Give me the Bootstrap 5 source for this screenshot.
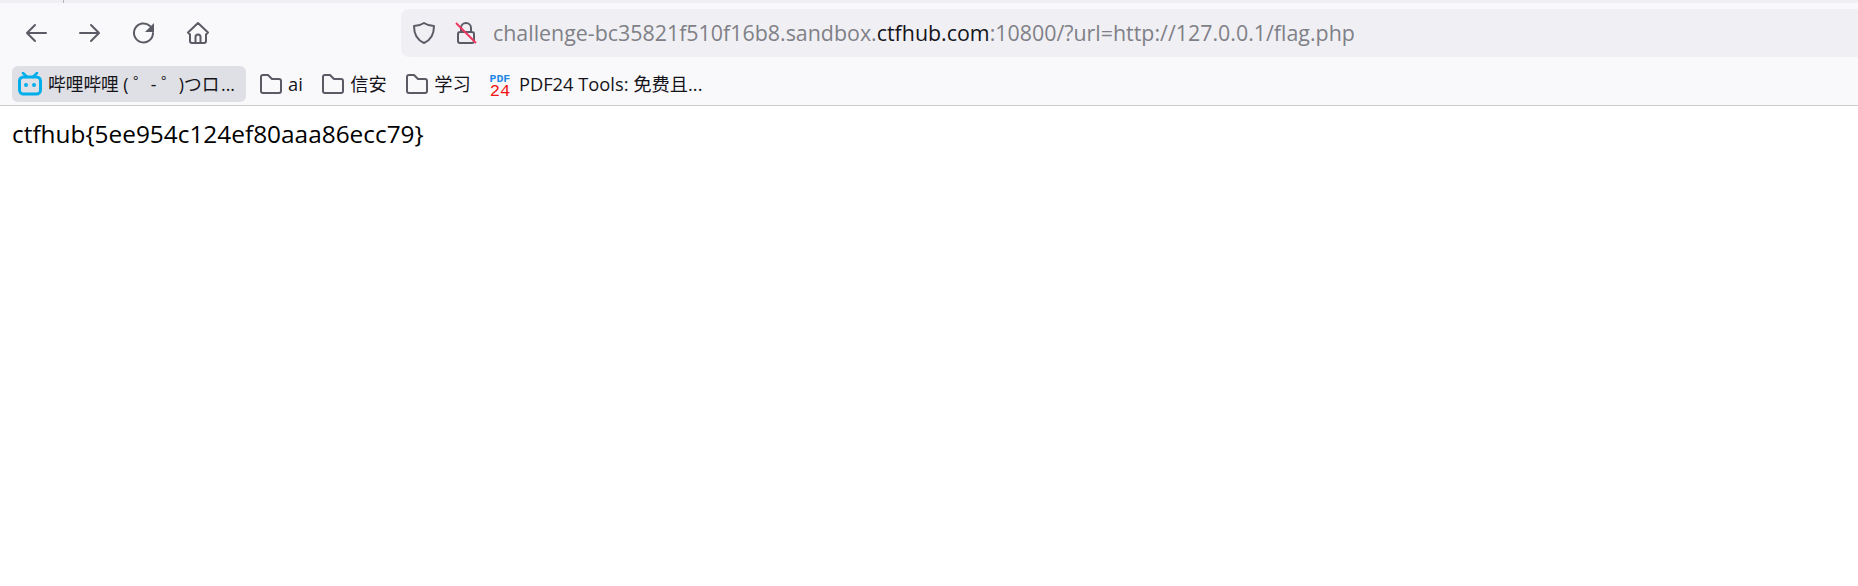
<!DOCTYPE html>
<html lang="zh">
<head>
<meta charset="utf-8">
<title>flag</title>
<link href="https://cdn.jsdelivr.net/npm/bootstrap@5.3.0/dist/css/bootstrap.min.css" rel="stylesheet">
<style>
html,body{height:100%;background:#fff;overflow:hidden}
body{font-family:"Open Sans","Noto Sans CJK SC",sans-serif;color:#15141a}
.tabstrip{height:3px;background:#f0f0f4}
.tabline{width:1px;height:3px;background:#b8b8bc;margin-left:63px}
.toolrow{height:54px;background:#f9f9fb;padding-top:6px}
.toolicon{width:24px;height:24px;flex:none;color:#5b5b66}
.navset{width:401px;padding-left:24px;gap:30px;height:48px}
.urlbar{height:48px;background:#f0f0f4;border-radius:8px 0 0 8px;padding-left:11px;font-size:21.4px;color:#808087;white-space:nowrap}
.urltext{margin-left:15px}
.lockicon{margin-left:18px}
.urlstrong{color:#15141a}
.markrow{height:49px;background:#f9f9fb;border-bottom:1px solid #ccccd0;padding:9px 0 0 12px;font-size:18.3px}
.markitem{height:36px;white-space:nowrap;gap:5px;margin-left:18.5px}
.markactive{background:#dfe0e5;border-radius:6px;width:234px;padding-left:6px;margin-left:0;font-size:17.7px;gap:6px}
.markactive+.markitem{margin-left:13px}
.markpdf{gap:8px;margin-left:18px}
.dotstail{margin-left:-3px}
.foldicon{width:24px;height:24px;color:#5b5b66;flex:none}
.pdfmark{width:22px;height:23px;line-height:1;font-family:"Liberation Mono",monospace;flex:none}
.pdfblue{color:#1e88e5;font-size:11.5px;font-weight:700;height:10px}
.pdfred{color:#f01414;font-size:17px;font-weight:400}
.flagtext{font-size:24.4px;padding:11px 12px 0;color:#000;line-height:33px;white-space:nowrap}
</style>
</head>
<body>
<div class="tabstrip"><div class="tabline"></div></div>
<div class="toolrow d-flex align-items-start">
  <div class="navset d-flex align-items-center">
    <svg class="toolicon" viewBox="0 0 24 24" fill="none" stroke="currentColor" stroke-width="2" stroke-linecap="round" stroke-linejoin="round"><path d="M22 12H3M11 4l-8 8 8 8"/></svg>
    <svg class="toolicon" viewBox="0 0 24 24" fill="none" stroke="currentColor" stroke-width="2" stroke-linecap="round" stroke-linejoin="round"><path d="M2 12h19M13 4l8 8-8 8"/></svg>
    <svg class="toolicon" viewBox="0 0 24 24" fill="none" stroke="currentColor" stroke-width="2" stroke-linecap="round"><path d="M21 12a9.500 9.500 0 1 1-3-7"/><path d="M22 2v9h-9z" fill="currentColor" stroke="none"/></svg>
    <svg class="toolicon" viewBox="0 0 24 24" fill="none" stroke="currentColor" stroke-width="2" stroke-linejoin="round"><path d="M12 2 2 11.500 4 13.500V20a2 2 0 0 0 2 2h12a2 2 0 0 0 2-2v-6.500l2-2zM9.500 22v-6a2.500 2.500 0 0 1 5 0v6"/></svg>
  </div>
  <div class="urlbar flex-grow-1 d-flex align-items-center">
    <svg class="toolicon" viewBox="0 0 24 24" fill="none" stroke="currentColor" stroke-width="2" stroke-linejoin="round"><path d="M12 2c3 2 6 3 10 3 0 8-3 14-10 17C5 19 2 13 2 5c4 0 7-1 10-3z"/></svg>
    <svg class="toolicon lockicon" viewBox="0 0 24 24" fill="none"><path d="M7 11V7a5 5 0 0 1 10 0v4M6 11h12a2 2 0 0 1 2 2v7a2 2 0 0 1-2 2H6a2 2 0 0 1-2-2v-7a2 2 0 0 1 2-2z" stroke="currentColor" stroke-width="2"/><path d="M2 2l20 20" stroke="#f0355f" stroke-width="2"/></svg>
    <span class="urltext">challenge-bc35821f510f16b8.sandbox.<span class="urlstrong">ctfhub.com</span>:10800/?url=http://127.0.0.1/flag.php</span>
  </div>
</div>
<div class="markrow d-flex align-items-start">
  <div class="markitem markactive d-flex align-items-center">
    <svg class="foldicon" viewBox="0 0 24 24" fill="none"><path d="M5 1l4 4M19 1l-4 4" stroke="#00aeec" stroke-width="2.500" stroke-linecap="round"/><rect x="1.500" y="5" width="21" height="17" rx="4" stroke="#00aeec" stroke-width="3"/><circle cx="8" cy="13" r="2" fill="#00aeec"/><circle cx="16" cy="13" r="2" fill="#00aeec"/></svg>
    <span>哔哩哔哩 ( ゜- ゜)つロ <span class="dotstail">...</span></span>
  </div>
  <div class="markitem d-flex align-items-center"><svg class="foldicon" viewBox="0 0 24 24" fill="none" stroke="currentColor" stroke-width="2" stroke-linejoin="round"><path d="M2 5a2 2 0 0 1 2-2h5l4 4h7a2 2 0 0 1 2 2v10a2 2 0 0 1-2 2H4a2 2 0 0 1-2-2z"/></svg><span>ai</span></div>
  <div class="markitem d-flex align-items-center"><svg class="foldicon" viewBox="0 0 24 24" fill="none" stroke="currentColor" stroke-width="2" stroke-linejoin="round"><path d="M2 5a2 2 0 0 1 2-2h5l4 4h7a2 2 0 0 1 2 2v10a2 2 0 0 1-2 2H4a2 2 0 0 1-2-2z"/></svg><span>信安</span></div>
  <div class="markitem d-flex align-items-center"><svg class="foldicon" viewBox="0 0 24 24" fill="none" stroke="currentColor" stroke-width="2" stroke-linejoin="round"><path d="M2 5a2 2 0 0 1 2-2h5l4 4h7a2 2 0 0 1 2 2v10a2 2 0 0 1-2 2H4a2 2 0 0 1-2-2z"/></svg><span>学习</span></div>
  <div class="markitem markpdf d-flex align-items-center"><div class="pdfmark text-center"><div class="pdfblue">PDF</div><div class="pdfred">24</div></div><span>PDF24 Tools: 免费且...</span></div>
</div>
<div class="flagtext">ctfhub{5ee954c124ef80aaa86ecc79}</div>
<script src="https://cdn.jsdelivr.net/npm/bootstrap@5.3.0/dist/js/bootstrap.bundle.min.js"></script>
</body>
</html>
